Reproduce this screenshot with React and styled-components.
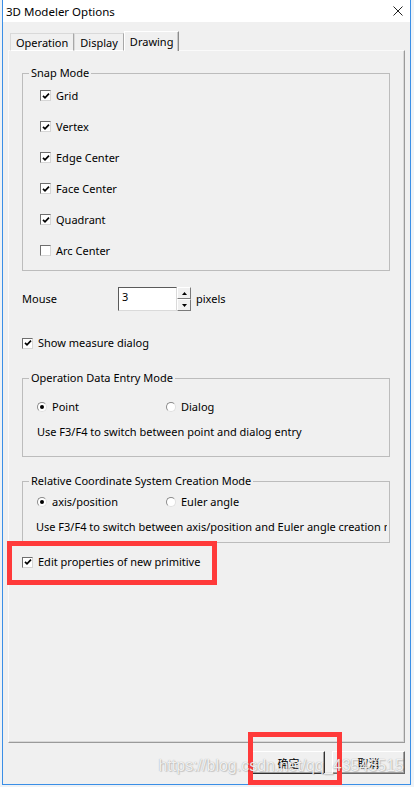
import React from 'react';
import styled, { createGlobalStyle } from 'styled-components';

const Global = createGlobalStyle`
  html, body { margin: 0; padding: 0; }
  body {
    width: 414px; height: 787px; overflow: hidden;
    background: #eef2f6;
    font-family: "Noto Sans", "Noto Sans CJK SC", sans-serif;
    color: #000;
  }
`;

const Page = styled.div`
  width: 414px;
  height: 787px;
  display: flex;
  align-items: flex-start;
  background: #eef2f6;
`;

const Window = styled.div`
  position: relative;
  margin-left: 2px;
  width: 407px;
  height: 784px;
  border: 1px solid #3a8ee6;
  border-top: none;
  display: flex;
  flex-direction: column;
  background: #f0f0f0;
`;

const TitleBar = styled.div`
  height: 22px;
  flex: none;
  background: #fff;
  display: flex;
  align-items: center;
  justify-content: space-between;
  padding: 0 7px 0 3px;
  font-size: 11.5px;
`;

const Body = styled.div`
  flex: 1;
  display: flex;
  flex-direction: column;
  padding: 9px 5px 10px 5px;
  min-height: 0;
`;

const TabStrip = styled.div`
  display: flex;
  align-items: flex-end;
  height: 20px;
  padding-left: 2px;
  margin-bottom: -1px;
  position: relative;
  z-index: 1;
`;

const Tab = styled.div`
  height: ${p => (p.$active ? '20px' : '18px')};
  box-sizing: border-box;
  padding: 0 5px;
  display: flex;
  align-items: center;
  font-size: 11px;
  background: #f0f0f0;
  border: 1px solid ${p => (p.$active ? '#fff' : '#d9d9d9')};
  border-right: 1px solid ${p => (p.$active ? '#8c8c8c' : '#a8a8a8')};
  border-bottom: ${p => (p.$active ? 'none' : '1px solid #fff')};
  box-shadow: ${p => (p.$active ? 'inset -1px 0 0 #c8c8c8' : 'none')};
`;

const Panel = styled.div`
  flex: 1;
  display: flex;
  flex-direction: column;
  padding: 22px 14px 0 13px;
  border: 1px solid #fafafa;
  border-right-color: #9a9a9a;
  border-bottom-color: #9a9a9a;
  box-shadow: inset -1px -1px 0 #d8d8d8;
  font-size: 11px;
  line-height: 16px;
`;

const Group = styled.div`
  position: relative;
  border: 1px solid #bcbcbc;
  margin-top: ${p => p.$mt}px;
  padding: ${p => p.$pad};
  display: flex;
  flex-direction: column;
`;

const Caption = styled.div`
  position: absolute;
  top: -9px;
  left: 6px;
  padding: 0 2px;
  background: #f0f0f0;
  line-height: 16px;
`;

const SnapRow = styled.div`
  height: 31px;
  display: flex;
  align-items: center;
  gap: 5px;
`;

const Line = styled.div`
  height: 16px;
  display: flex;
  align-items: center;
  gap: ${p => p.$gap ?? 5}px;
  margin-top: ${p => p.$mt ?? 0}px;
  position: relative;
  white-space: nowrap;
  overflow: ${p => (p.$clip ? 'hidden' : 'visible')};
`;

const Box = styled.span`
  width: 11px;
  height: 11px;
  flex: none;
  box-sizing: border-box;
  background: #fff;
  border: 1px solid #6e6e6e;
  border-right-color: #d6d6d6;
  border-bottom-color: #d6d6d6;
  display: flex;
  align-items: center;
  justify-content: center;
`;

const RadioDot = styled.span`
  width: 10px;
  height: 10px;
  flex: none;
  box-sizing: border-box;
  border-radius: 50%;
  background: #fff;
  border: 1px solid #8a8a8a;
  border-right-color: #e0e0e0;
  border-bottom-color: #e0e0e0;
  display: flex;
  align-items: center;
  justify-content: center;
  &::after {
    content: '';
    width: 4px;
    height: 4px;
    border-radius: 50%;
    background: ${p => (p.$on ? '#000' : 'transparent')};
  }
`;

const RadioOption = styled.span`
  display: flex;
  align-items: center;
  gap: 5px;
  width: ${p => (p.$w ? `${p.$w}px` : 'auto')};
`;

const MouseRow = styled.div`
  margin-top: 16px;
  height: 24px;
  display: flex;
  align-items: center;
`;

const MouseLabel = styled.span`
  width: 96px;
`;

const Input = styled.div`
  width: 59px;
  height: 24px;
  box-sizing: border-box;
  background: #fff;
  border: 1px solid #dadada;
  border-left-color: #5a5a5a;
  border-top-color: #5a5a5a;
  padding: 2px 0 0 3px;
  line-height: 14px;
  font-size: 11px;
`;

const Spin = styled.div`
  width: 14px;
  height: 24px;
  display: flex;
  flex-direction: column;
  margin-right: 5px;
`;

const SpinBtn = styled.div`
  flex: 1;
  box-sizing: border-box;
  border: 1px solid #fff;
  border-right-color: #7a7a7a;
  border-bottom-color: #7a7a7a;
  background: #f0f0f0;
  display: flex;
  align-items: center;
  justify-content: center;
`;

const Annot = styled.div`
  position: absolute;
  border: 5px solid #ff3a3a;
  pointer-events: none;
  box-sizing: border-box;
  left: ${p => p.$l}px;
  top: ${p => p.$t}px;
  width: ${p => p.$w}px;
  height: ${p => p.$h}px;
  z-index: 3;
`;

const ButtonRow = styled.div`
  margin-top: 8px;
  display: flex;
  justify-content: flex-end;
  gap: 7px;
`;

const Button = styled.div`
  position: relative;
  width: 73px;
  height: 23px;
  box-sizing: border-box;
  display: flex;
  align-items: center;
  justify-content: center;
  background: #f0f0f0;
  border: 1px solid #fff;
  border-right-color: ${p => (p.$default ? '#303030' : '#6a6a6a')};
  border-bottom-color: ${p => (p.$default ? '#303030' : '#6a6a6a')};
  box-shadow: inset -1px -1px 0 #a0a0a0;
  font-family: "Noto Sans CJK SC", sans-serif;
  font-size: 11px;
`;

const Watermark = styled.div`
  position: absolute;
  right: 6px;
  bottom: 9px;
  font-family: "Liberation Sans", Arial, sans-serif;
  font-size: 16px;
  color: rgba(255, 255, 255, 0.85);
  text-shadow: 0 0 1px rgba(90, 90, 90, 0.55), 1px 1px 1px rgba(0, 0, 0, 0.15);
  pointer-events: none;
  z-index: 4;
  white-space: nowrap;
`;

const Check = ({ on }) => (
  <Box>
    {on && (
      <svg width="8" height="8" viewBox="0 0 8 8">
        <path d="M1 3.8 L3 5.8 L7 1.6" fill="none" stroke="#000" strokeWidth="1.7" />
      </svg>
    )}
  </Box>
);

const snaps = [
  ['Grid', true],
  ['Vertex', true],
  ['Edge Center', true],
  ['Face Center', true],
  ['Quadrant', true],
  ['Arc Center', false],
];

export default function App() {
  return (
    <Page>
      <Global />
      <Window>
        <TitleBar>
          <span>3D Modeler Options</span>
          <svg width="10" height="10" viewBox="0 0 10 10">
            <path d="M0.5 0.5 L9.5 9.5 M9.5 0.5 L0.5 9.5" stroke="#222" strokeWidth="1" />
          </svg>
        </TitleBar>
        <Body>
          <TabStrip>
            <Tab>Operation</Tab>
            <Tab>Display</Tab>
            <Tab $active>Drawing</Tab>
          </TabStrip>
          <Panel>
            <Group $mt={0} $pad="6px 0 4px 17px">
              <Caption>Snap Mode</Caption>
              {snaps.map(([label, on]) => (
                <SnapRow key={label}>
                  <Check on={on} />
                  <span>{label}</span>
                </SnapRow>
              ))}
            </Group>

            <MouseRow>
              <MouseLabel>Mouse</MouseLabel>
              <Input>3</Input>
              <Spin>
                <SpinBtn>
                  <svg width="5" height="3" viewBox="0 0 5 3"><path d="M0 3 L2.5 0 L5 3 Z" fill="#000" /></svg>
                </SpinBtn>
                <SpinBtn>
                  <svg width="5" height="3" viewBox="0 0 5 3"><path d="M0 0 L5 0 L2.5 3 Z" fill="#000" /></svg>
                </SpinBtn>
              </Spin>
              <span>pixels</span>
            </MouseRow>

            <Line $mt={24}>
              <Check on />
              <span>Show measure dialog</span>
            </Line>

            <Group $mt={27} $pad="20px 2px 16px 14px">
              <Caption>Operation Data Entry Mode</Caption>
              <Line $gap={0}>
                <RadioOption $w={129}><RadioDot $on />Point</RadioOption>
                <RadioOption><RadioDot />Dialog</RadioOption>
              </Line>
              <Line $mt={9}>Use F3/F4 to switch between point and dialog entry</Line>
            </Group>

            <Group $mt={24} $pad="12px 2px 7px 13px">
              <Caption>Relative Coordinate System Creation Mode</Caption>
              <Line $gap={0}>
                <RadioOption $w={129} style={{ marginLeft: 1 }}><RadioDot $on />axis/position</RadioOption>
                <RadioOption><RadioDot />Euler angle</RadioOption>
              </Line>
              <Line $mt={9} $clip>Use F3/F4 to switch between axis/position and Euler angle creation mode</Line>
            </Group>

            <Line $mt={11}>
              <Check on />
              <span>Edit properties of new primitive</span>
              <Annot $l={-15} $t={-13} $w={210} $h={44} />
            </Line>
          </Panel>
          <ButtonRow>
            <Button $default>
              确定
              <Annot $l={-5} $t={-20} $w={94} $h={53} />
            </Button>
            <Button>取消</Button>
          </ButtonRow>
        </Body>
        <Watermark>https://blog.csdn.net/qq_43543515</Watermark>
      </Window>
    </Page>
  );
}
